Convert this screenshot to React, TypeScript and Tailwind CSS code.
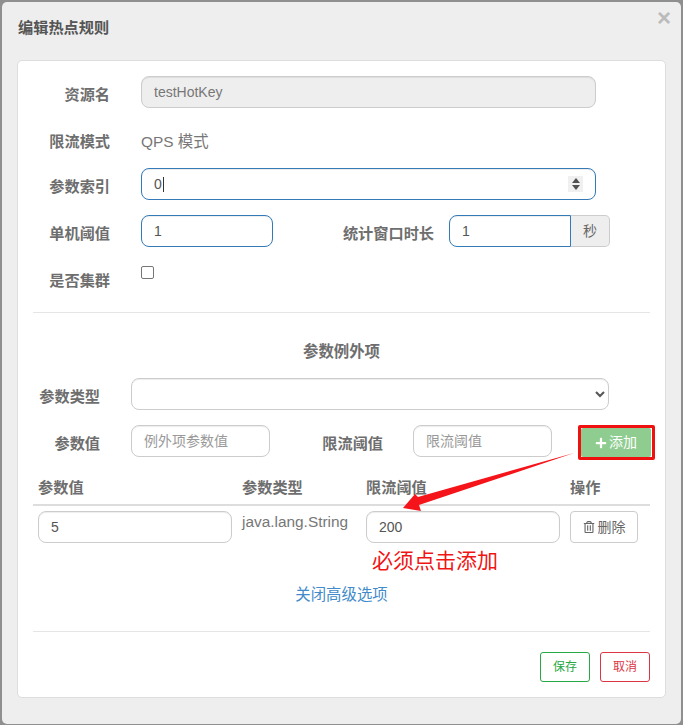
import { FaPlus, FaRegTrashAlt } from "react-icons/fa"

const inputBase =
  "block h-8 shrink-0 rounded-[8px] border px-3 text-[14px] text-[#555] outline-none shadow-[inset_0_1px_1px_rgb(0_0_0/0.075)] placeholder:text-[#999]"
const inputClass = `${inputBase} border-[#ccc] bg-white`
const focusClass = `${inputBase} border-[#337ab7] bg-white`

function Label({ w, children }: { w: string; children: string }) {
  return <label className={`${w} shrink-0 pt-[9px] text-right text-[15.2px] leading-5 font-bold whitespace-nowrap text-[#6e6e6e]`}>{children}</label>
}

export default function App() {
  return (
    <div
      className="relative h-[725px] w-[683px] overflow-hidden bg-[#8f8f8f] pt-[2px] pl-[2px]"
      style={{ fontFamily: '"Liberation Sans", "Noto Sans CJK SC", sans-serif' }}
    >
      <div className="relative h-[722px] w-[679px] rounded-[5px] bg-[#eee] px-[15px]">
        <div className="h-[58px] pt-[16px] pl-px text-[15.2px] leading-5 font-bold text-[#555]">编辑热点规则</div>
        <button className="absolute top-[4px] right-[10px] text-[24px] leading-6 font-bold text-[#bbb]">×</button>

        <div className="h-[638px] w-[649px] rounded-[5px] border border-[#ddd] bg-white px-[15px] pt-[15px]">
          <div className="flex gap-[31px]">
            <Label w="w-[77px]">资源名</Label>
            <input
              readOnly
              value="testHotKey"
              className={`${inputBase} w-[455px] border-[#ccc] bg-[#eee] text-[#777]`}
            />
          </div>

          <div className="mt-[24px] flex h-5 gap-[31px] text-[15.4px] leading-5">
            <span className="w-[77px] shrink-0 text-right text-[15.2px] font-bold whitespace-nowrap text-[#6e6e6e]">限流模式</span>
            <span className="text-[#777]">QPS 模式</span>
          </div>

          <div className="mt-[16px] flex gap-[31px]">
            <Label w="w-[77px]">参数索引</Label>
            <div className={`${focusClass} relative flex w-[455px] items-center leading-5`}>
              0<span className="ml-px h-[15px] w-px bg-[#333]" />
              <div className="absolute top-[7px] right-[12px] flex h-[16px] w-[15px] flex-col items-center justify-center gap-[2px] bg-[#f0f0f0]">
                <span className="h-0 w-0 border-x-[4px] border-b-[5px] border-x-transparent border-b-[#505050]" />
                <span className="h-0 w-0 border-x-[4px] border-t-[5px] border-x-transparent border-t-[#505050]" />
              </div>
            </div>
          </div>

          <div className="mt-[15px] flex">
            <Label w="w-[77px]">单机阈值</Label>
            <input readOnly value="1" className={`${focusClass} ml-[31px] w-[132px]`} />
            <Label w="ml-[69px] w-[92px]">统计窗口时长</Label>
            <input readOnly value="1" className={`${focusClass} ml-[15px] w-[122px] rounded-r-none`} />
            <span className="flex h-8 w-[39px] shrink-0 items-center justify-center rounded-r-[5px] border border-l-0 border-[#ccc] bg-[#eee] text-[14px] text-[#666]">秒</span>
          </div>

          <div className="mt-[19px] flex h-[46px] gap-[31px]">
            <span className="w-[77px] shrink-0 pt-[5px] text-right text-[15.2px] leading-5 font-bold whitespace-nowrap text-[#6e6e6e]">是否集群</span>
            <span className="h-[13px] w-[13px] rounded-[2px] border border-[#767676] bg-white" />
          </div>

          <div className="h-px bg-[#e5e5e5]" />

          <div className="mt-[29px] text-center text-[15.4px] leading-5 font-bold text-[#6e6e6e]">参数例外项</div>

          <div className="mt-[16px] flex gap-[31px]">
            <Label w="w-[67px]">参数类型</Label>
            <select className={`${inputClass} w-[478px] px-[8px]`}>
              <option></option>
            </select>
          </div>

          <div className="mt-[15px] flex h-8">
            <Label w="w-[67px]">参数值</Label>
            <input readOnly placeholder="例外项参数值" className={`${inputClass} ml-[31px] w-[139px]`} />
            <Label w="ml-[52px] w-[61px]">限流阈值</Label>
            <input readOnly placeholder="限流阈值" className={`${inputClass} ml-[30px] w-[139px]`} />
            <div className="ml-[26px] h-[35px] w-[77px] shrink-0 rounded-[2px] border-[3px] border-[#f01010] bg-white pr-px">
              <button className="flex h-[29px] w-full items-center justify-center gap-[2px] rounded-[2px] bg-[#8fcc8f] text-[14px] text-white">
                <FaPlus className="size-[12px]" />
                添加
              </button>
            </div>
          </div>

          <div className="mt-[20px] grid h-[29px] grid-cols-[204px_124px_204px_1fr] border-b-2 border-[#ddd] px-[5px] pt-px text-[15.2px] leading-5 font-bold text-[#6e6e6e]">
            <span>参数值</span>
            <span>参数类型</span>
            <span>限流阈值</span>
            <span>操作</span>
          </div>

          <div className="grid grid-cols-[204px_124px_204px_1fr] px-[5px] pt-[5px]">
            <input readOnly value="5" className={`${inputClass} w-[194px]`} />
            <span className="pt-px text-[15.4px] leading-5 text-[#777]">java.lang.String</span>
            <input readOnly value="200" className={`${inputClass} w-[194px]`} />
            <button className="flex h-8 w-[68px] items-center justify-center gap-[3px] rounded-[4px] border border-[#ccc] bg-white text-[14px] text-[#666]">
              <FaRegTrashAlt className="size-[12px]" />
              删除
            </button>
          </div>

          <div className="mt-[6px] ml-[339px] text-[21px] leading-6 text-[#f01414]">必须点击添加</div>

          <a className="mt-[12px] block text-center text-[15.4px] leading-5 text-[#428bca]">关闭高级选项</a>

          <div className="mt-[26px] h-px bg-[#e5e5e5]" />

          <div className="mt-[20px] flex justify-end gap-[10px]">
            <button className="h-[30px] w-[50px] rounded-[3px] border border-[#28a745] bg-white text-[12px] text-[#28a745]">保存</button>
            <button className="h-[30px] w-[50px] rounded-[3px] border border-[#dc3545] bg-white text-[12px] text-[#dc3545]">取消</button>
          </div>
        </div>
      </div>

      {/* hand-drawn annotation arrow */}
      <svg className="pointer-events-none absolute inset-0" width="683" height="725" viewBox="0 0 683 725">
        <polygon points="574,453 418,497 415,494 403,508 421,511 419,505" fill="#f5141a" />
      </svg>
    </div>
  )
}
